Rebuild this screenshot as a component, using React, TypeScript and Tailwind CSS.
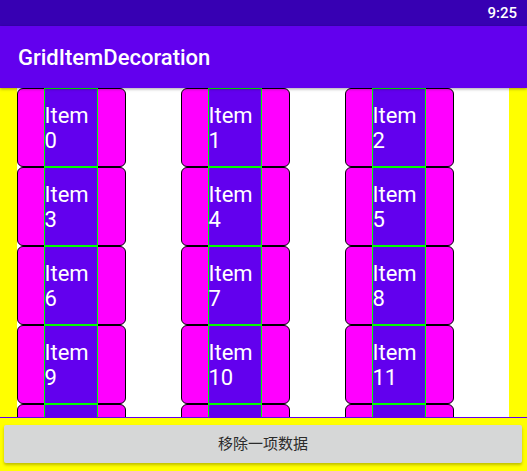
import React from 'react';

const items = Array.from({ length: 15 }, (_, i) => i);

const GridCard = ({ index }: { index: number }) => {
  return (
    <div className="flex w-[109px] h-[79px] rounded-[6px] border-[1.5px] border-black bg-[#ff00ff]">
      <div className="ml-[25.5px] -my-[1.5px] w-[54px] h-[79px] shrink-0 border border-[#00ff00] bg-[#6200ee] pt-[14px] text-[22px] leading-[25px] text-white">
        Item
        <br />
        {index}
      </div>
    </div>
  );
};

const App = () => {
  return (
    <div
      className="flex flex-col h-screen w-full overflow-hidden bg-[#ffff00]"
      style={{ fontFamily: 'Roboto, "Noto Sans CJK SC", sans-serif' }}
    >
      <div className="flex h-[26px] shrink-0 items-center justify-end bg-[#3700b3] pr-[10px]">
        <span className="text-[15px] font-medium text-white">9:25</span>
      </div>

      <div className="relative z-10 flex h-[62px] shrink-0 items-center bg-[#6200ee] pl-[18px] shadow-[0_1px_3px_rgba(0,0,0,0.35)]">
        <h1 className="text-[22px] font-medium text-white">GridItemDecoration</h1>
      </div>

      <div className="h-[330px] shrink-0 border-b border-[#6200ee] pl-[17px] pr-[18px]">
        <div className="grid h-full grid-cols-3 content-start overflow-hidden bg-white">
          {items.map((i) => (
            <GridCard key={i} index={i} />
          ))}
        </div>
      </div>

      <div className="pl-[4px] pr-[5px] pt-[7px]">
        <button className="flex h-[38px] w-full items-center justify-center rounded-[2px] bg-[#d6d7d7] text-[15px] text-[#2b2b2b] shadow-[0_2px_3px_rgba(0,0,0,0.25)]">
          移除一项数据
        </button>
      </div>
    </div>
  );
};

export default App;
